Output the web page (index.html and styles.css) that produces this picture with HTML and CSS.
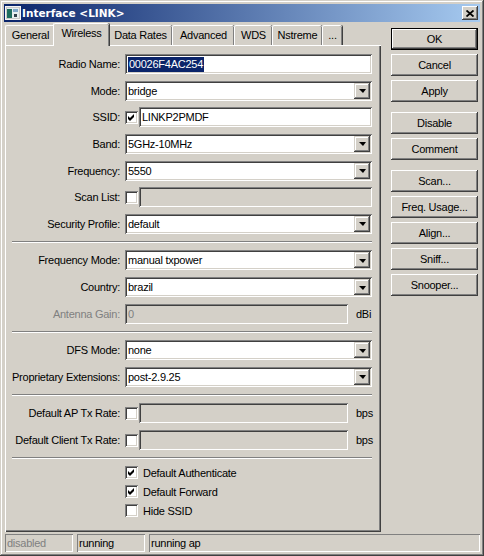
FILE: index.html
```html
<!DOCTYPE html>
<html lang="en">
<head>
  <meta charset="UTF-8" />
  <title>Interface &lt;LINK&gt;</title>
  <link rel="stylesheet" href="styles.css">
</head>
<body>
  <div class="window">

    <!-- title bar -->
    <div class="titlebar">
      <svg class="app-icon" width="16" height="14" viewBox="0 0 16 14">
        <rect x="0.5" y="0.5" width="15" height="13" fill="#c8c8c8" stroke="#f4f4f4"/>
        <rect x="2" y="2" width="12" height="10" fill="#e6eef0"/>
        <rect x="2" y="3" width="5" height="9" fill="#1e6e5e"/>
        <rect x="8" y="3" width="5" height="3" fill="#7fa8c8"/>
        <rect x="9" y="8" width="3" height="3" fill="#30404a"/>
      </svg>
      <span class="title">Interface &lt;LINK&gt;</span>
      <div class="close-btn">
        <svg width="8" height="7" viewBox="0 0 8 7">
          <path d="M0.5 0.5 L7.5 6.5 M7.5 0.5 L0.5 6.5" stroke="#000" stroke-width="1.8" fill="none"/>
        </svg>
      </div>
    </div>

    <div class="main">
      <div class="tabs-col">

        <!-- tabs -->
        <div class="tabs">
          <div class="tab tab-general">General</div>
          <div class="tab tab-wireless active">Wireless</div>
          <div class="tab tab-rates">Data Rates</div>
          <div class="tab tab-advanced">Advanced</div>
          <div class="tab tab-wds">WDS</div>
          <div class="tab tab-nstreme">Nstreme</div>
          <div class="tab tab-more">...</div>
        </div>

        <div class="page">

          <div class="group">
            <div class="row">
              <span class="lbl">Radio Name:</span>
              <div class="edit"><span class="sel">00026F4AC254</span></div>
            </div>
            <div class="row">
              <span class="lbl">Mode:</span>
              <div class="edit combo"><span class="val">bridge</span><span class="drop"></span></div>
            </div>
            <div class="row">
              <span class="lbl">SSID:</span>
              <div class="field">
                <span class="check"><svg width="7" height="7" viewBox="0 0 7 7"><path d="M0 2 L2 4 L6 0 L6 3 L2 7 L0 5 Z" fill="#000"/></svg></span>
                <div class="edit">LINKP2PMDF</div>
              </div>
            </div>
            <div class="row">
              <span class="lbl">Band:</span>
              <div class="edit combo"><span class="val">5GHz-10MHz</span><span class="drop"></span></div>
            </div>
            <div class="row">
              <span class="lbl">Frequency:</span>
              <div class="edit combo"><span class="val">5550</span><span class="drop"></span></div>
            </div>
            <div class="row">
              <span class="lbl">Scan List:</span>
              <div class="field">
                <span class="check"></span>
                <div class="edit disabled"></div>
              </div>
            </div>
            <div class="row">
              <span class="lbl">Security Profile:</span>
              <div class="edit combo"><span class="val">default</span><span class="drop"></span></div>
            </div>
          </div>

          <div class="sep"></div>

          <div class="group">
            <div class="row">
              <span class="lbl">Frequency Mode:</span>
              <div class="edit combo"><span class="val">manual txpower</span><span class="drop"></span></div>
            </div>
            <div class="row">
              <span class="lbl">Country:</span>
              <div class="edit combo"><span class="val">brazil</span><span class="drop"></span></div>
            </div>
            <div class="row">
              <span class="lbl dim">Antenna Gain:</span>
              <div class="field">
                <div class="edit disabled">0</div>
                <span class="unit">dBi</span>
              </div>
            </div>
          </div>

          <div class="sep"></div>

          <div class="group">
            <div class="row">
              <span class="lbl">DFS Mode:</span>
              <div class="edit combo"><span class="val">none</span><span class="drop"></span></div>
            </div>
            <div class="row">
              <span class="lbl">Proprietary Extensions:</span>
              <div class="edit combo"><span class="val">post-2.9.25</span><span class="drop"></span></div>
            </div>
          </div>

          <div class="sep"></div>

          <div class="group">
            <div class="row">
              <span class="lbl">Default AP Tx Rate:</span>
              <div class="field">
                <span class="check"></span>
                <div class="edit disabled"></div>
                <span class="unit">bps</span>
              </div>
            </div>
            <div class="row">
              <span class="lbl">Default Client Tx Rate:</span>
              <div class="field">
                <span class="check"></span>
                <div class="edit disabled"></div>
                <span class="unit">bps</span>
              </div>
            </div>
          </div>

          <div class="sep tight"></div>

          <div class="checks">
            <div class="checkrow">
              <span class="check"><svg width="7" height="7" viewBox="0 0 7 7"><path d="M0 2 L2 4 L6 0 L6 3 L2 7 L0 5 Z" fill="#000"/></svg></span>
              <span>Default Authenticate</span>
            </div>
            <div class="checkrow">
              <span class="check"><svg width="7" height="7" viewBox="0 0 7 7"><path d="M0 2 L2 4 L6 0 L6 3 L2 7 L0 5 Z" fill="#000"/></svg></span>
              <span>Default Forward</span>
            </div>
            <div class="checkrow">
              <span class="check"></span>
              <span>Hide SSID</span>
            </div>
          </div>

        </div>
      </div>

      <!-- right-hand buttons -->
      <div class="buttons">
        <div class="btn-group">
          <div class="btn default">OK</div>
          <div class="btn">Cancel</div>
          <div class="btn">Apply</div>
        </div>
        <div class="btn-group">
          <div class="btn">Disable</div>
          <div class="btn">Comment</div>
        </div>
        <div class="btn-group">
          <div class="btn">Scan...</div>
          <div class="btn">Freq. Usage...</div>
          <div class="btn">Align...</div>
          <div class="btn">Sniff...</div>
          <div class="btn">Snooper...</div>
        </div>
      </div>
    </div>

    <!-- status bar -->
    <div class="statusbar">
      <div class="status s-small dim">disabled</div>
      <div class="status s-small">running</div>
      <div class="status s-wide">running ap</div>
    </div>

  </div>
</body>
</html>
```

FILE: styles.css
```css
* { box-sizing: border-box; }
html, body { margin: 0; padding: 0; }
body {
  background: #d4d0c8;
  color: #000;
  font-family: "Liberation Sans", Arial, sans-serif;
  font-size: 11px;
  letter-spacing: -0.25px;
}

.window {
  width: 484px;
  height: 556px;
  padding: 4px;
  display: flex;
  flex-direction: column;
  background: #d4d0c8;
  box-shadow: inset -1px -1px #404040, inset 1px 1px #d4d0c8,
              inset -2px -2px #808080, inset 2px 2px #fff;
}

/* title bar */
.titlebar {
  height: 18px;
  display: flex;
  align-items: center;
  padding: 0 2px 0 1px;
  background: linear-gradient(to right, #0a246a, #a6caf0);
}
.app-icon { display: block; margin-right: 1px; }
.title {
  flex: 1;
  color: #fff;
  font-family: "DejaVu Sans", sans-serif;
  font-weight: bold;
  font-size: 10.5px;
  letter-spacing: 0;
}
.close-btn {
  width: 16px;
  height: 14px;
  display: flex;
  align-items: center;
  justify-content: center;
  background: #d4d0c8;
  box-shadow: inset -1px -1px #404040, inset 1px 1px #fff,
              inset -2px -2px #808080;
}
.close-btn svg { display: block; }

.main {
  height: 509px;
  margin-top: 1px;
  display: flex;
}

/* tabs */
.tabs-col {
  width: 376px;
  margin-left: 1px;
  display: flex;
  flex-direction: column;
}
.tabs {
  height: 22px;
  display: flex;
  align-items: flex-end;
  z-index: 1;
}
.tab {
  height: 20px;
  line-height: 19px;
  text-align: center;
  background: #d4d0c8;
  border-top: 1px solid #fff;
  border-left: 1px solid #fff;
  border-radius: 2px 2px 0 0;
  box-shadow: inset -1px 0 #808080, 1px 0 #404040;
}
.tab-general  { width: 50px; }
.tab-wireless { width: 53px; }
.tab-rates    { width: 64px; }
.tab-advanced { width: 62px; }
.tab-wds      { width: 38px; }
.tab-nstreme  { width: 50px; }
.tab-more     { width: 20px; }
.tab.active {
  width: 56px;
  height: 23px;
  margin: 0 -1px -1px -2px;
  line-height: 19px;
  z-index: 2;
}

/* tab page */
.page {
  flex: 1;
  padding: 9px 9px 0 7px;
  display: flex;
  flex-direction: column;
  box-shadow: inset 1px 1px #fff, inset -1px -1px #404040,
              inset -2px -2px #808080;
}
.group {
  display: flex;
  flex-direction: column;
  gap: 6.67px;
}
.row {
  height: 20px;
  display: grid;
  grid-template-columns: 108px 1fr;
  column-gap: 5px;
  align-items: center;
}
.lbl { text-align: right; white-space: nowrap; }
.dim { color: #808080; }

.sep {
  height: 2px;
  margin: 7px 0 7.5px;
  border-top: 1px solid #808080;
  border-bottom: 1px solid #fff;
}
.sep.tight { margin-bottom: 4px; }

/* inputs */
.field {
  height: 20px;
  display: flex;
  align-items: center;
  gap: 1px;
}
.edit {
  flex: 1;
  height: 20px;
  padding: 0 3px;
  display: flex;
  align-items: center;
  white-space: nowrap;
  overflow: hidden;
  background: #fff;
  box-shadow: inset 1px 1px #808080, inset -1px -1px #fff,
              inset 2px 2px #404040, inset -2px -2px #d4d0c8;
}
.edit.disabled { background: #d4d0c8; color: #808080; }
.combo { padding-right: 2px; }
.combo .val { flex: 1; }
.sel {
  height: 15px;
  line-height: 15px;
  padding: 0 1px;
  background: #0a246a;
  color: #fff;
}
.drop {
  width: 16px;
  height: 16px;
  display: flex;
  align-items: center;
  justify-content: center;
  background: #d4d0c8;
  box-shadow: inset -1px -1px #404040, inset 1px 1px #d4d0c8,
              inset -2px -2px #808080, inset 2px 2px #fff;
}
.drop::after {
  content: "";
  border-left: 4px solid transparent;
  border-right: 3px solid transparent;
  border-top: 4px solid #000;
  margin-top: 1px;
}
.unit { width: 23px; padding-left: 7px; }

.check {
  width: 13px;
  height: 13px;
  flex: none;
  padding: 3px;
  background: #fff;
  box-shadow: inset 1px 1px #808080, inset -1px -1px #fff,
              inset 2px 2px #404040, inset -2px -2px #d4d0c8;
}
.check svg { display: block; }

.checkrow {
  height: 19px;
  padding-left: 113px;
  display: flex;
  align-items: center;
  gap: 5px;
}

/* right buttons */
.buttons {
  width: 87px;
  margin: 5px 2px 0 10px;
  display: flex;
  flex-direction: column;
  gap: 10px;
}
.btn-group { display: flex; flex-direction: column; gap: 4px; }
.btn {
  height: 22px;
  line-height: 22px;
  text-align: center;
  box-shadow: inset -1px -1px #404040, inset 1px 1px #fff,
              inset -2px -2px #808080, inset 2px 2px #d4d0c8;
}
.btn.default {
  box-shadow: inset 0 0 0 1px #000, inset -2px -2px #404040,
              inset 2px 2px #fff, inset -3px -3px #808080;
}

/* status bar */
.statusbar {
  height: 18px;
  margin: 2px 0 0 1px;
  display: flex;
  gap: 4px;
}
.status {
  height: 18px;
  line-height: 18px;
  padding-left: 2px;
  box-shadow: inset 1px 1px #808080, inset -1px -1px #fff;
}
.s-small { width: 68px; }
.s-wide { flex: 1; }
```
